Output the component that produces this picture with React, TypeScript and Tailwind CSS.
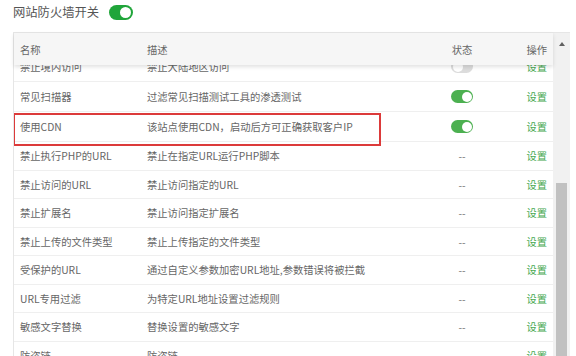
import React from 'react';

interface Rule {
  name: string;
  desc: string;
  state: 'on' | 'off' | 'none';
}

const rules: Rule[] = [
  { name: '禁止境内访问', desc: '禁止大陆地区访问', state: 'off' },
  { name: '常见扫描器', desc: '过滤常见扫描测试工具的渗透测试', state: 'on' },
  { name: '使用CDN', desc: '该站点使用CDN，启动后方可正确获取客户IP', state: 'on' },
  { name: '禁止执行PHP的URL', desc: '禁止在指定URL运行PHP脚本', state: 'none' },
  { name: '禁止访问的URL', desc: '禁止访问指定的URL', state: 'none' },
  { name: '禁止扩展名', desc: '禁止访问指定扩展名', state: 'none' },
  { name: '禁止上传的文件类型', desc: '禁止上传指定的文件类型', state: 'none' },
  { name: '受保护的URL', desc: '通过自定义参数加密URL地址,参数错误将被拦截', state: 'none' },
  { name: 'URL专用过滤', desc: '为特定URL地址设置过滤规则', state: 'none' },
  { name: '敏感文字替换', desc: '替换设置的敏感文字', state: 'none' },
  { name: '防盗链', desc: '防盗链', state: 'none' },
];

const Switch: React.FC<{ on: boolean }> = ({ on }) => (
  <span
    className={
      on
        ? 'flex h-[13px] w-[22px] items-center justify-end rounded-full bg-[#4cb050] pr-[1.5px]'
        : 'flex h-[13px] w-[22px] items-center justify-start rounded-full bg-[#dcdcdc] pl-[1.5px]'
    }
  >
    <span className="h-[10px] w-[10px] rounded-full bg-white" />
  </span>
);

const App: React.FC = () => {
  return (
    <div
      className="h-[356px] w-[576px] overflow-hidden bg-white text-[10.3px] text-[#666]"
      style={{ fontFamily: '"Noto Sans CJK SC", "Noto Sans", sans-serif' }}
    >
      <div className="flex h-[32px] items-center gap-[10px] pb-[7px] pl-[13px]">
        <span className="text-[12.3px] text-[#555]">网站防火墙开关</span>
        <span className="flex h-[15px] w-[24px] items-center justify-end rounded-full bg-[#20a53a] pr-[2px]">
          <span className="h-[11px] w-[11px] rounded-full bg-white" />
        </span>
      </div>

      <div className="ml-[13px] flex h-[324px] w-[557px] border-t border-[#e6e6e6]">
        <div className="flex w-[540px] flex-col border-l border-[#e6e6e6]">
          <div className="relative z-10 grid h-[32px] shrink-0 grid-cols-[126px_287px_70px_56px] items-center bg-[#f6f6f6] pt-[1px] shadow-[0_2px_4px_rgba(0,0,0,0.12)]">
            <span className="pl-[6px]">名称</span>
            <span className="pl-[7px]">描述</span>
            <span className="text-center">状态</span>
            <span className="pr-[6px] text-right">操作</span>
          </div>
          <div className="flex-1 overflow-hidden">
            <div className="-mt-[13px]">
              {rules.map((r) => (
                <div
                  key={r.name}
                  className={
                    (r.state === 'none' ? 'h-[28.5px]' : 'h-[30px]') +
                    ' relative grid grid-cols-[126px_287px_70px_56px] items-center border-b border-[#efefef]'
                  }
                >
                  <span className="pl-[6px] whitespace-nowrap">{r.name}</span>
                  <span className="pl-[7px] whitespace-nowrap">{r.desc}</span>
                  <span className="flex justify-center">
                    {r.state === 'none' ? <span className="text-[#777]">--</span> : <Switch on={r.state === 'on'} />}
                  </span>
                  <span className="pr-[6px] text-right text-[#45a84f]">设置</span>
                  {r.name === '使用CDN' && (
                    <div className="pointer-events-none absolute left-[-1px] top-[1px] h-[33px] w-[368px] border-2 border-[#dc3a3a]" />
                  )}
                </div>
              ))}
            </div>
          </div>
        </div>

        <div className="flex w-[17px] flex-col bg-[#f1f1f1]">
          <div className="flex h-[14px] items-end justify-center pb-[1px]">
            <span className="h-0 w-0 border-x-[3px] border-b-[4px] border-x-transparent border-b-[#606060]" />
          </div>
          <div className="h-[136px]" />
          <div className="mx-[3px] flex-1 bg-[#c1c1c1]" />
        </div>
      </div>
    </div>
  );
};

export default App;
